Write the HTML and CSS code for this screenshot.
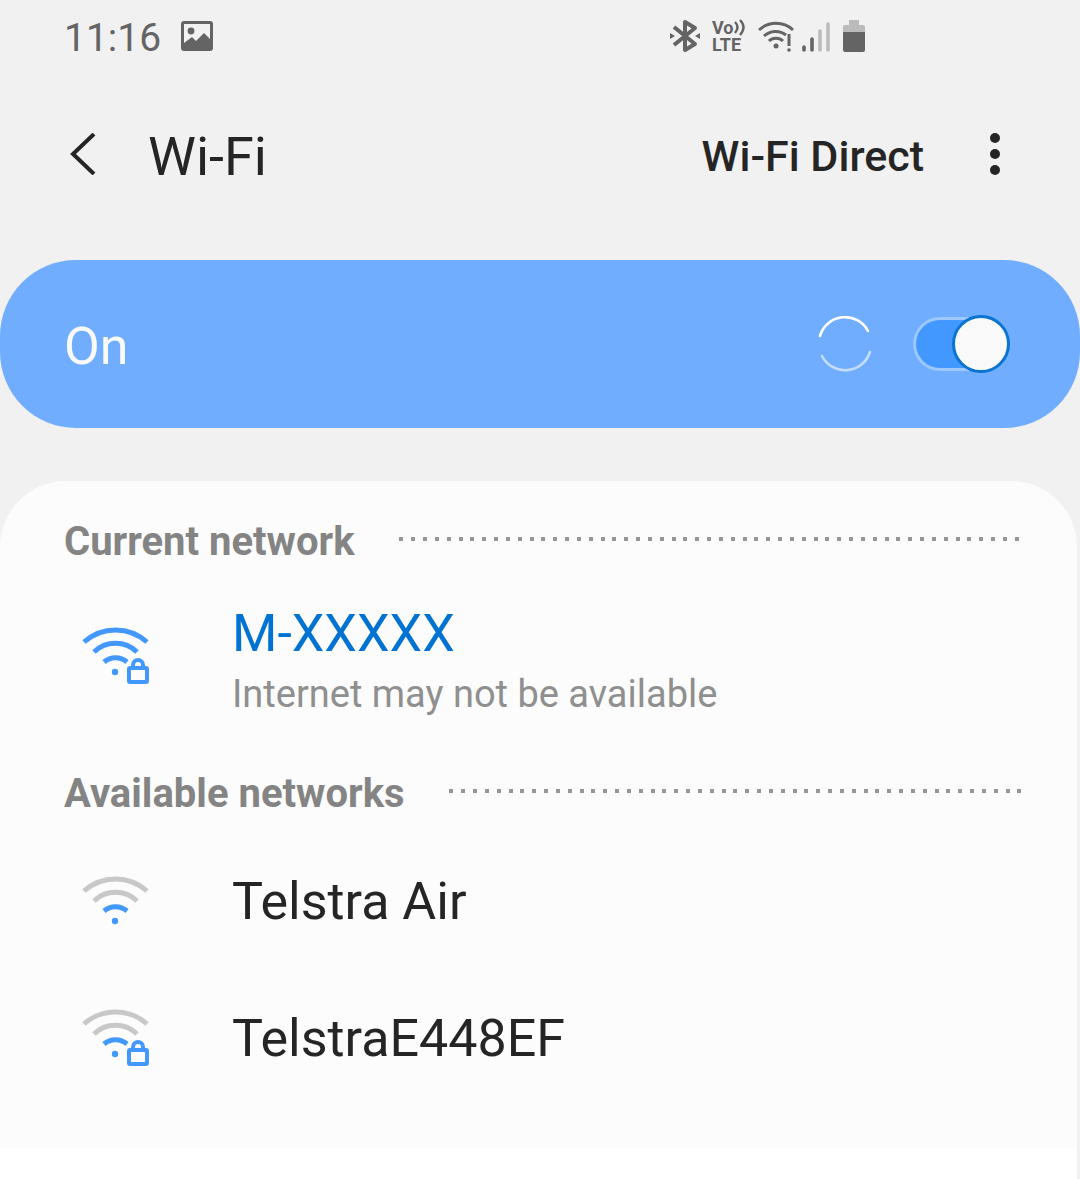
FILE: index.html
```html
<!DOCTYPE html>
<html lang="en">
<head>
<meta charset="utf-8">
<meta name="viewport" content="width=device-width, initial-scale=1">
<title>Wi-Fi</title>
<link rel="stylesheet" href="styles.css">
</head>
<body>
<div class="status">
  <span class="clock">11:16</span>
  <svg class="picture" width="32" height="30" viewBox="0 0 32 30" aria-hidden="true">
    <path fill="#646464" fill-rule="evenodd" d="M3 0H29Q32 0 32 3V27Q32 30 29 30H3Q0 30 0 27V3Q0 0 3 0ZM3 3V22L11 16L15 20L23 12L29 18V3Z"/>
    <circle cx="10" cy="10" r="3.4" fill="#646464"/>
  </svg>
  <div class="indicators">
    <svg width="30" height="34" viewBox="0 0 30 34" aria-hidden="true">
      <path d="M4 8L25 25L15 31V3L25 9L4 26" fill="none" stroke="#646464" stroke-width="4" stroke-linejoin="round"/>
      <path d="M0 14L5 17L0 20ZM30 14L25 17L30 20Z" fill="#646464"/>
    </svg>
    <div class="volte">
      <span class="voice">Vo<svg width="12" height="17" viewBox="0 0 12 17" aria-hidden="true">
        <path d="M1 3Q6 8 1 14M6 1Q13 8 6 16" fill="none" stroke="#646464" stroke-width="2.4"/>
      </svg></span>
      <span>LTE</span>
    </div>
    <svg class="wifi-state" width="36" height="34" viewBox="0 0 36 34" aria-hidden="true">
      <g fill="none" stroke="#646464" stroke-width="3">
        <path d="M1 11A25 25 0 0 1 35 11M6 17A17 17 0 0 1 28 16M11 22A10 10 0 0 1 25 22"/>
        <path d="M31 15V27"/>
      </g>
      <circle cx="18" cy="27" r="2.5" fill="#646464"/>
      <circle cx="31" cy="31" r="1.8" fill="#646464"/>
    </svg>
    <svg class="signal" width="28" height="34" viewBox="0 0 28 34" aria-hidden="true">
      <g stroke-width="3.6" stroke-linecap="round">
        <path d="M2 28V31M10 20V31" stroke="#646464"/>
        <path d="M18 12V31M26 5V31" stroke="#bbb"/>
      </g>
    </svg>
    <svg class="battery" width="22" height="34" viewBox="0 0 22 34" aria-hidden="true">
      <path d="M6 1H16V6H20Q22 6 22 8V13H0V8Q0 6 2 6H6Z" fill="#bbb"/>
      <path d="M0 13H22V31Q22 33 20 33H2Q0 33 0 31Z" fill="#646464"/>
    </svg>
  </div>
</div>

<header class="bar">
  <button class="back" type="button" aria-label="Back">
    <svg width="26" height="42" viewBox="0 0 26 42"><path d="M24 1L3 21L24 41" fill="none" stroke="#252525" stroke-width="4"/></svg>
  </button>
  <h1 class="title">Wi-Fi</h1>
  <button class="direct" type="button">Wi-Fi Direct</button>
  <button class="more" type="button" aria-label="More options">
    <svg width="10" height="42" viewBox="0 0 10 42" fill="#252525"><circle cx="5" cy="5" r="5"/><circle cx="5" cy="21" r="5"/><circle cx="5" cy="37" r="5"/></svg>
  </button>
</header>

<main>
  <div class="power">
    <label class="power-label" for="wifi-switch">On</label>
    <svg class="spinner" width="54" height="56" viewBox="0 0 54 56" fill="none" stroke-width="2.6" stroke-linecap="round" aria-hidden="true">
      <path d="M2 20A26 26 0 0 1 50 15" stroke="#fff"/>
      <path d="M4 40A26 26 0 0 0 52 36" stroke="#c4ddff"/>
    </svg>
    <input class="switch" id="wifi-switch" type="checkbox" role="switch" checked>
  </div>

  <div class="panel">
    <section>
      <h2 class="heading">Current network</h2>
      <ul class="list">
        <li>
          <button class="network current" type="button">
            <svg class="wifi" width="70" height="62" viewBox="0 0 70 62" aria-hidden="true">
              <g fill="none" stroke="#4298ff" stroke-width="5">
                <path d="M2 16A47 47 0 0 1 65 16M12 26A31 31 0 0 1 55 26M22 36A18 18 0 0 1 45 36"/>
                <path d="M51 42V39A5 5 0 0 1 61 39V42" stroke-width="4"/>
                <rect x="47" y="42" width="18" height="14" rx="1" stroke-width="4"/>
              </g>
              <circle cx="33" cy="46" r="3.2" fill="#4298ff"/>
            </svg>
            <span class="text">
              <span class="name">M-XXXXX</span>
              <span class="note">Internet may not be available</span>
            </span>
          </button>
        </li>
      </ul>
    </section>
    <section>
      <h2 class="heading">Available networks</h2>
      <ul class="list available">
        <li>
          <button class="network" type="button">
            <svg class="wifi" width="70" height="54" viewBox="0 0 70 54" fill="none" stroke-width="5" aria-hidden="true">
              <path d="M2 16A47 47 0 0 1 65 16M12 26A31 31 0 0 1 55 26" stroke="#c8c8c8"/>
              <path d="M22 36A18 18 0 0 1 45 36" stroke="#4298ff"/>
              <circle cx="33" cy="46" r="3.2" fill="#4298ff"/>
            </svg>
            <span class="name">Telstra Air</span>
          </button>
        </li>
        <li>
          <button class="network" type="button">
            <svg class="wifi" width="70" height="62" viewBox="0 0 70 62" fill="none" stroke-width="5" aria-hidden="true">
              <path d="M2 16A47 47 0 0 1 65 16M12 26A31 31 0 0 1 55 26" stroke="#c8c8c8"/>
              <path d="M22 36A18 18 0 0 1 45 36" stroke="#4298ff"/>
              <path d="M51 42V39A5 5 0 0 1 61 39V42" stroke="#4298ff" stroke-width="4"/>
              <rect x="47" y="42" width="18" height="14" rx="1" stroke="#4298ff" stroke-width="4"/>
              <circle cx="33" cy="46" r="3.2" fill="#4298ff"/>
            </svg>
            <span class="name">TelstraE448EF</span>
          </button>
        </li>
      </ul>
    </section>
  </div>
</main>
</body>
</html>
```
FILE: styles.css
```css
* { box-sizing: border-box; }

body {
  margin: 0;
  min-height: 100vh;
  display: flex;
  flex-direction: column;
  background: #f1f1f1;
  color: #252525;
  font-family: Roboto, "Liberation Sans", sans-serif;
}

svg { display: block; flex: none; }

button {
  padding: 0;
  border: 0;
  background: none;
  color: inherit;
  font: inherit;
  text-align: left;
}

.status {
  display: flex;
  align-items: center;
  height: 72px;
  padding: 0 215px 0 64px;
  color: #646464;
}

.clock { font-size: 39px; line-height: 48px; padding-top: 4px; }
.picture { margin-left: 20px; }
.indicators { display: flex; align-items: center; margin-left: auto; }

.volte {
  display: flex;
  flex-direction: column;
  width: 34px;
  margin-left: 12px;
  font-size: 18px;
  font-weight: 700;
  line-height: 17px;
}

.voice { display: flex; }

.wifi-state { margin-left: 12px; }
.signal { margin-left: 8px; }
.battery { margin-left: 13px; }

.bar {
  display: flex;
  align-items: center;
  height: 164px;
  padding: 0 80px 0 70px;
}

.title {
  margin: 6px 0 0 52px;
  font-size: 54px;
  font-weight: 400;
  line-height: 64px;
}

.direct {
  margin: 4px 0 0 auto;
  font-size: 43px;
  font-weight: 500;
  line-height: 52px;
}

.more { margin-left: 66px; }

main { flex: 1; display: flex; flex-direction: column; }

.power {
  display: flex;
  align-items: center;
  height: 168px;
  margin: 24px 0 53px;
  padding: 0 70px 0 64px;
  border-radius: 76px;
  background: #70adff;
}

.power-label {
  flex: 1;
  padding-top: 6px;
  color: #fafafa;
  font-size: 52px;
  line-height: 60px;
}

.spinner { margin-right: 41px; }

.switch {
  appearance: none;
  display: flex;
  align-items: center;
  justify-content: flex-end;
  width: 97px;
  height: 54px;
  margin: 0;
  border: 3px solid #9cc7ff;
  border-right: 0;
  border-radius: 27px;
  background: #4298ff;
}

.switch::before {
  content: "";
  flex: none;
  box-sizing: border-box;
  width: 58px;
  height: 58px;
  border: 3px solid #0b74d1;
  border-radius: 50%;
  background: #fafafa;
}

.panel {
  flex: 1;
  margin-right: 3px;
  padding: 33px 0 31px;
  border-radius: 66px 66px 0 0;
  background: linear-gradient(#fff, #fff) bottom / 100% 31px no-repeat #fcfcfc;
}

.heading {
  display: flex;
  align-items: center;
  gap: 44px;
  margin: 0;
  padding: 0 56px 0 64px;
  color: #848484;
  font-size: 40px;
  font-weight: 700;
  line-height: 56px;
}

/* Dotted leader: six dots to each 71px tile */
.heading::after {
  content: "";
  flex: 1;
  height: 4px;
  margin-bottom: 6px;
  background: linear-gradient(90deg,
    #969696 4px, transparent 4px 12px,
    #969696 12px 16px, transparent 16px 24px,
    #969696 24px 28px, transparent 28px 36px,
    #969696 36px 40px, transparent 40px 48px,
    #969696 48px 52px, transparent 52px 60px,
    #969696 60px 64px, transparent 64px) 0 0 / 71px 4px repeat-x;
}

.list { margin: 0; padding: 0; list-style: none; }
.available { padding-top: 11px; }

.network {
  display: flex;
  align-items: center;
  gap: 80px;
  width: 100%;
  height: 137px;
  padding: 0 56px 0 82px;
}

.current { height: 196px; padding-bottom: 12px; }
.current .wifi { margin-bottom: 10px; }
.current .name { color: #0072d2; }

.text { display: flex; flex-direction: column; }
.name { font-size: 52px; line-height: 64px; }
.note { color: #8f8f8f; font-size: 38px; line-height: 56px; }
```
